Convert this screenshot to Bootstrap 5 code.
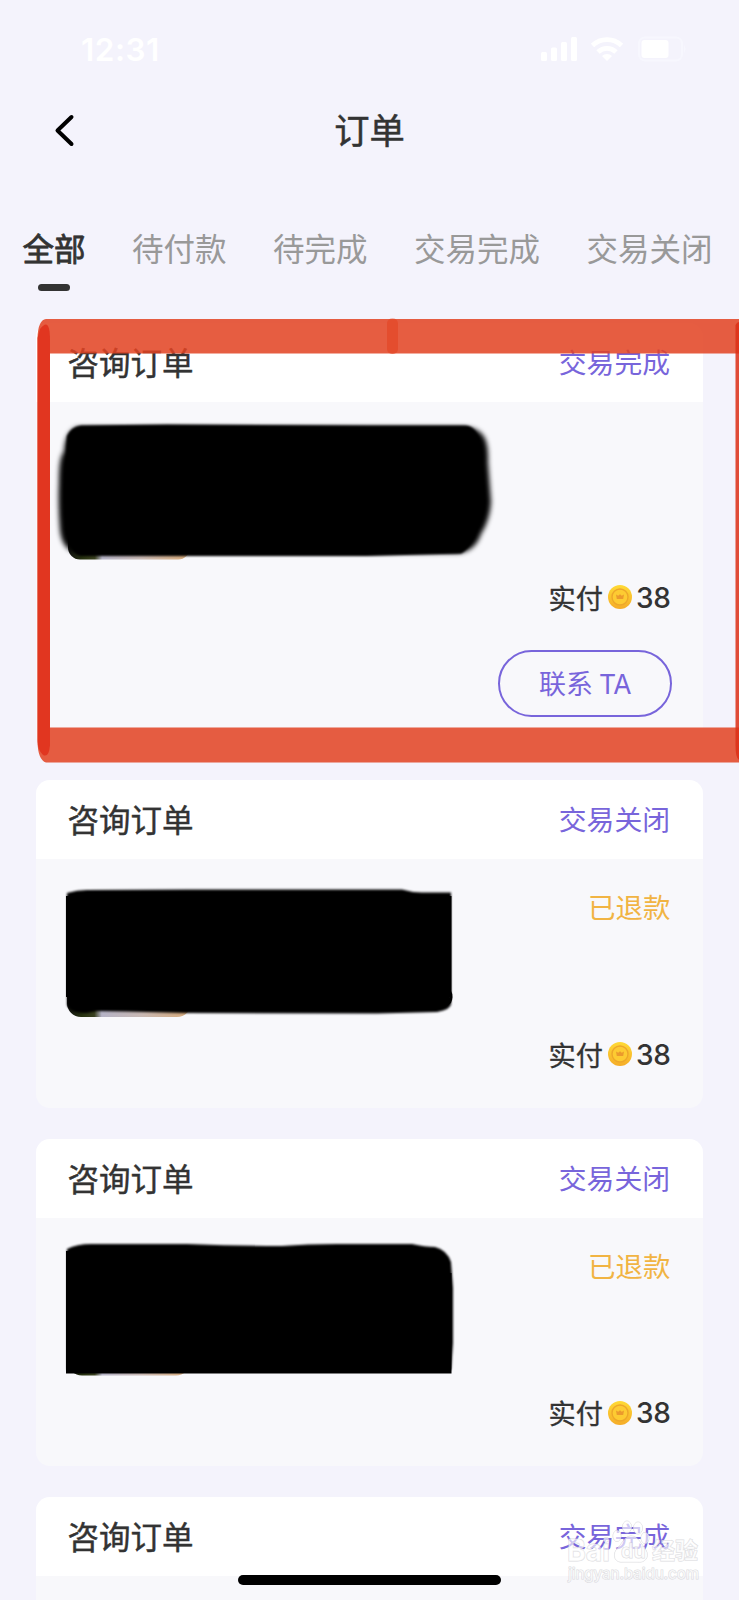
<!DOCTYPE html>
<html lang="zh-CN">
<head>
<meta charset="utf-8">
<meta name="viewport" content="width=device-width, initial-scale=1">
<title>订单</title>
<link href="https://cdn.jsdelivr.net/npm/bootstrap@5.3.0/dist/css/bootstrap.min.css" rel="stylesheet">
<style>
body{background:#f4f3fc;font-family:"Noto Sans CJK SC",sans-serif;color:#333}
.screen{width:739px;height:1600px;background:#f4f3fc}
.status-bar{height:98px;padding:0 53px 0 81px}
.clock{font:600 31.5px/98px Inter,sans-serif;color:#fff;letter-spacing:.5px;padding-top:2px}
.title-bar{height:64px}
.title-bar h1{font-size:35.3px;line-height:61px;-webkit-text-stroke:.5px #333;font-weight:400}
.back-btn{left:52px;top:14px}
.tabs{height:161px;padding:64px 0 0 22.5px;gap:46.5px}
.tabs a{font-size:31.5px;line-height:42px;color:#999;text-decoration:none;white-space:nowrap}
.tabs a.active{color:#333;-webkit-text-stroke:.8px #333}
.tabs a.active::after{content:"";display:block;width:32px;height:7px;border-radius:3.5px;background:#333;margin:16px auto 0}
.orders{padding:0 36px;gap:31px}
.order{border:0;border-radius:14px;background:#f8f8fb;overflow:hidden;flex:none}
.order .card-header{height:79px;border:0;background:#fff;padding:0 33px 0 31.5px}
.kind{font-size:31.5px;line-height:77px;-webkit-text-stroke:.45px #333}
.state{font-size:27.8px;line-height:77px;color:#7865db}
.order .card-body{padding:20px 31px 32px}
.order.refunded .card-body{padding-bottom:32.5px}
.summary{height:154px}
.refund{font-size:27.5px;line-height:40px;margin:7px 1.5px 0 0;color:#f1b443}
.price{height:42px;font-size:27.2px;line-height:41px;margin-right:1.5px}
.price .paid{-webkit-text-stroke:.35px #333}
.price .coin{margin:0 4px 0 5px}
.price .num{font:500 28px/42px Inter,sans-serif;letter-spacing:-.3px;padding-top:1px}
.contact{width:174px;height:67px;border:2px solid #7865db;border-radius:34px;color:#7865db;margin-top:32px;padding:0;font-size:27px;line-height:61px}
.contact span{font-family:Inter,sans-serif;font-size:26.5px;letter-spacing:-.5px}
.overlay{left:0;top:0;pointer-events:none}
.home-bar{left:238px;top:1575px;width:263px;height:10px;background:#000}
.wm{left:566px;top:1517px;width:140px}
</style>
</head>
<body>
<main class="screen position-relative overflow-hidden">
  <div class="status-bar d-flex justify-content-between align-items-center">
    <span class="clock">12:31</span>
    <svg width="146" height="30" viewBox="540 34 146 30" fill="#fff">
      <rect x="541" y="52" width="6" height="9" rx="1.5"/><rect x="551" y="47.500" width="6" height="13.500" rx="1.500"/><rect x="561" y="42" width="6" height="19" rx="1.500"/><rect x="571" y="37" width="6" height="24" rx="1.500"/>
      <g fill="none" stroke="#fff" stroke-width="4.800"><path d="M592.500 45.500a21 21 0 0 1 29 0M598 52a13 13 0 0 1 18 0"/></g><path d="M602 56a7 7 0 0 1 10 0l-5 5z"/>
      <rect x="639" y="37.500" width="43" height="23" rx="6" fill="none" stroke="#f7f7fe" stroke-width="2"/><rect x="641.500" y="40" width="27" height="18" rx="3"/><path d="M684 45q3 4 0 8z" fill="#f7f7fe"/>
    </svg>
  </div>
  <header class="title-bar position-relative text-center">
    <a class="back-btn position-absolute lh-1" href="#" aria-label="返回"><svg class="d-block" width="26" height="36" viewBox="0 0 26 36" fill="none" stroke="#000" stroke-width="4" stroke-linecap="round" stroke-linejoin="round"><path d="M19.500 5 5.500 18.500 19.500 32"/></svg></a>
    <h1 class="m-0">订单</h1>
  </header>
  <nav class="tabs d-flex"><a class="active" href="#">全部</a><a href="#">待付款</a><a href="#">待完成</a><a href="#">交易完成</a><a href="#">交易关闭</a></nav>

  <svg width="0" height="0" class="position-absolute" aria-hidden="true">
    <defs>
      <filter id="soft" x="-5%" y="-10%" width="110%" height="120%"><feGaussianBlur stdDeviation="1"/></filter>
      <filter id="softer" x="-10%" y="-10%" width="120%" height="120%"><feGaussianBlur stdDeviation="2.500"/></filter>
      <linearGradient id="photo"><stop offset="0" stop-color="#111"/><stop offset=".12" stop-color="#26310f"/><stop offset=".22" stop-color="#39401f"/><stop offset=".28" stop-color="#b5b3c6"/><stop offset=".6" stop-color="#c9b9b4"/><stop offset="1" stop-color="#d8aa78"/></linearGradient>
      <linearGradient id="gold" x2="0" y2="1"><stop offset="0" stop-color="#ffda35"/><stop offset="1" stop-color="#f5ac28"/></linearGradient>
      <symbol id="coin" viewBox="0 0 24 24"><circle cx="12" cy="12" r="12" fill="url(#gold)"/><circle cx="12" cy="12" r="8" fill="#fdcb32" stroke="#eda72a" stroke-width="1.400"/><path d="M8 9.500l2.200 1.200 1.800-1.500 1.800 1.500L16 9.500l-.8 4.500H8.800z" fill="#eb9a2c"/></symbol>
    </defs>
  </svg>

  <section class="orders d-flex flex-column">
    <article class="card order">
      <div class="card-header d-flex justify-content-between"><span class="kind">咨询订单</span><span class="state">交易完成</span></div>
      <div class="card-body d-flex flex-column align-items-end">
        <div class="summary d-flex w-100">
          <svg width="430" height="145" overflow="visible"><rect x="1" y="20" width="122" height="117.500" rx="12" fill="url(#photo)"/><path filter="url(#softer)" d="M10 5Q-2 10-3 30-8 34-8 60-9 85-7 108-5 126 6 129L390 131Q408 130 414 112 423 98 424 80L421 40Q422 18 414 11 408 5 395 5z"/><path filter="url(#soft)" d="M14 3.500 100 2.500 300 3.500H398Q409 4 412 18L416 70 413 98Q406 125 394 131.500L300 134 110 134H14Q2 132 1 108L-2 70 0 14Q4 5 14 3.500z"/></svg>
        </div>
        <div class="price d-flex align-items-center"><span class="paid">实付</span><svg class="coin" width="24" height="24"><use href="#coin"/></svg><span class="num">38</span></div>
        <button class="btn contact">联系 <span>TA</span></button>
      </div>
    </article>
    <article class="card order refunded">
      <div class="card-header d-flex justify-content-between"><span class="kind">咨询订单</span><span class="state">交易关闭</span></div>
      <div class="card-body d-flex flex-column align-items-end">
        <div class="summary d-flex justify-content-between w-100">
          <svg width="386" height="145" overflow="visible"><rect x="0" y="18" width="124" height="120" rx="14" fill="url(#photo)"/><path filter="url(#soft)" d="M0 14Q10 11 20 11L120 10.500H335Q345 13.500 355 13.500H384V124Q385 130 370 133L310 134.500 120 134 60 132.500 30 132 20 134Q4 135 0 126z"/><path d="M-1 17H384.500V118H-1z"/><path d="M384 112q3 5 0 12l-4 3z"/></svg>
          <span class="refund">已退款</span>
        </div>
        <div class="price d-flex align-items-center"><span class="paid">实付</span><svg class="coin" width="24" height="24"><use href="#coin"/></svg><span class="num">38</span></div>
      </div>
    </article>
    <article class="card order refunded">
      <div class="card-header d-flex justify-content-between"><span class="kind">咨询订单</span><span class="state">交易关闭</span></div>
      <div class="card-body d-flex flex-column align-items-end">
        <div class="summary d-flex justify-content-between w-100">
          <svg width="386" height="145" overflow="visible"><rect x="1" y="18" width="122" height="119.500" rx="14" fill="url(#photo)"/><path filter="url(#soft)" d="M0 11Q10 6 24 6L120 6Q170 8 215 8 240 6 270 6H345Q358 9 368 9 380 12 384 24L386 50V105L384 132H0z"/><path d="M-1 35H384.500V135.500H-1z"/><path d="M-1 13H8V40H-1z"/></svg>
          <span class="refund">已退款</span>
        </div>
        <div class="price d-flex align-items-center"><span class="paid">实付</span><svg class="coin" width="24" height="24"><use href="#coin"/></svg><span class="num">38</span></div>
      </div>
    </article>
    <article class="card order">
      <div class="card-header d-flex justify-content-between"><span class="kind">咨询订单</span><span class="state">交易完成</span></div>
      <div class="card-body"><div class="summary"></div></div>
    </article>
  </section>

  <!-- marker strokes around the first order -->
  <svg class="overlay position-absolute" width="739" height="800" viewBox="0 0 739 800">
    <g fill="#e24222" fill-opacity=".86">
      <path d="M46 319H739V353.500H50V727.500H739V762.500H46Q38 760 37.500 742V338Q38 320 46 319z"/>
      <path d="M40 329Q50 316 50 340V745Q49 758 43 755 37.500 750 37.500 740V338z" fill="#e0301b"/>
      <path d="M735.500 325Q737 322 739 322V760Q735.500 758 735.500 745z" fill="#dc2f16"/>
      <rect x="387" y="318.500" width="11" height="35.500" rx="5" fill-opacity=".6"/>
    </g>
  </svg>

  <svg class="wm position-absolute" height="70" viewBox="566 1517 140 70" fill="#fff" fill-opacity=".65" stroke="#c9c9ce" stroke-opacity=".65" stroke-width="1" paint-order="stroke">
    <g><ellipse cx="617" cy="1536" rx="4" ry="5.500"/><ellipse cx="627" cy="1527" rx="4.500" ry="6"/><ellipse cx="638" cy="1528" rx="4.500" ry="6"/><ellipse cx="645" cy="1538" rx="4" ry="5.500"/><path d="M631 1536c7 0 10 8 15 14 4 8-2 13-8 12h-15c-7 1-11-5-7-12 5-4 8-14 15-14z"/></g>
    <text x="567" y="1561" font-family="Inter,sans-serif" font-size="30" font-weight="700" textLength="43" lengthAdjust="spacingAndGlyphs">Bai</text>
    <text x="621" y="1558" font-family="Inter,sans-serif" font-size="20" font-weight="600">du</text>
    <text x="652" y="1559" font-family="Noto Sans CJK SC,sans-serif" font-size="23" font-weight="700">经验</text>
    <text x="568" y="1579" font-family="Inter,sans-serif" font-size="15" font-weight="500" textLength="131">jingyan.baidu.com</text>
  </svg>
  <div class="home-bar position-absolute rounded-pill"></div>
</main>
<script src="https://cdn.jsdelivr.net/npm/bootstrap@5.3.0/dist/js/bootstrap.bundle.min.js"></script>
</body>
</html>
